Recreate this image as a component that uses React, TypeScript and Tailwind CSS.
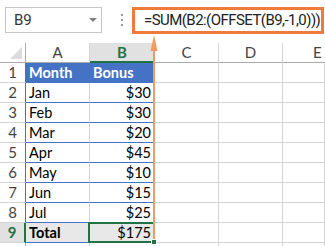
import { Fragment } from "react";

type Row = { n: number; a: string; b: string };

const rows: Row[] = [
  { n: 2, a: "Jan", b: "$30" },
  { n: 3, a: "Feb", b: "$30" },
  { n: 4, a: "Mar", b: "$20" },
  { n: 5, a: "Apr", b: "$45" },
  { n: 6, a: "May", b: "$10" },
  { n: 7, a: "Jun", b: "$15" },
  { n: 8, a: "Jul", b: "$25" },
];

const cellFont = { fontFamily: "Lato, 'Liberation Sans', sans-serif" };

function RowHead({ n, selected, blue }: { n?: number; selected?: boolean; blue?: boolean }) {
  return (
    <div
      className={
        "h-5 flex items-center justify-center border-b border-b-[#d4d4d4] text-[15px] " +
        (selected
          ? "bg-[#e1e1e1] text-[#217346] font-bold border-r-2 border-r-[#217346]"
          : blue
          ? "text-[#444] border-r border-r-[#4472c4]"
          : "text-[#444] border-r border-r-[#ababab]")
      }
    >
      {n}
    </div>
  );
}

function Empty() {
  return <div className="h-5 border-r border-b border-[#d4d4d4]" />;
}

export default function App() {
  return (
    <div className="relative w-[325px] h-[246px] overflow-hidden bg-white select-none" style={cellFont}>
      {/* formula bar */}
      <div className="h-[43px] flex items-start">
        <div className="mt-[7px] ml-[5px] w-[97px] h-[26px] border border-[#c6c6c6] flex items-center justify-between pl-[8px] pr-[4px]">
          <span className="text-[15px] text-[#333]" style={{ fontFamily: "Roboto, sans-serif" }}>B9</span>
          <svg width="8" height="5" viewBox="0 0 8 5">
            <path d="M0 0 L8 0 L4 4 Z" fill="#808080" />
          </svg>
        </div>
        <div className="ml-[19px] mt-[14px] flex flex-col gap-[3px]">
          <span className="w-[2px] h-[2px] bg-[#9a9a9a]" />
          <span className="w-[2px] h-[2px] bg-[#9a9a9a]" />
          <span className="w-[2px] h-[2px] bg-[#9a9a9a]" />
        </div>
        <div className="ml-[9px] mt-[7px] w-[192px] h-[27px] border-[3px] border-[#ee7b3b] flex items-center pl-[9px] overflow-hidden">
          <span
            className="text-[15px] text-[#222] whitespace-nowrap tracking-[-0.55px]"
            style={{ fontFamily: "Roboto, sans-serif" }}
          >
            =SUM(B2:(OFFSET(B9,-1,0)))
          </span>
        </div>
      </div>

      {/* grid */}
      <div className="grid grid-cols-[26px_64px_65px_64px_64px_1fr]">
        {/* column headers */}
        <div className="h-5 border-r border-r-[#ababab] border-b border-b-[#ababab] relative">
          <svg className="absolute right-[3px] bottom-[3px]" width="12" height="12" viewBox="0 0 12 12">
            <path d="M12 0 L12 12 L0 12 Z" fill="#dcdcdc" />
          </svg>
        </div>
        <div className="h-5 flex items-center justify-center text-[15px] text-[#444] border-r border-r-[#d4d4d4] border-b border-b-[#ababab]">A</div>
        <div className="h-5 flex items-center justify-center text-[15px] font-bold text-[#217346] bg-[#e1e1e1] border-r border-r-[#ababab] border-b-2 border-b-[#217346]">B</div>
        <div className="h-5 flex items-center justify-center text-[15px] text-[#444] border-r border-r-[#d4d4d4] border-b border-b-[#ababab]">C</div>
        <div className="h-5 flex items-center justify-center text-[15px] text-[#444] border-r border-r-[#d4d4d4] border-b border-b-[#ababab]">D</div>
        <div className="h-5 flex items-center pl-[30px] text-[15px] text-[#444] border-b border-b-[#ababab]">E</div>

        {/* row 1 */}
        <RowHead n={1} blue />
        <div className="h-5 bg-[#4472c4] border-b border-b-[#4472c4] flex items-center pl-[3px] text-[14.5px] font-bold text-white">Month</div>
        <div className="h-5 bg-[#4472c4] border-r border-r-[#4472c4] border-b border-b-[#4472c4] flex items-center pl-[3px] text-[14.5px] font-bold text-white">Bonus</div>
        <Empty />
        <Empty />
        <Empty />

        {rows.map((r) => (
          <Fragment key={r.n}>
            <RowHead n={r.n} blue />
            <div className="h-5 border-r border-r-[#d4d4d4] border-b border-b-[#4472c4] flex items-center pl-[3px] text-[14.5px] text-black">{r.a}</div>
            <div className="h-5 border-r border-r-[#4472c4] border-b border-b-[#4472c4] flex items-center justify-end pr-[3px] text-[14.5px] text-black">{r.b}</div>
            <Empty />
            <Empty />
            <Empty />
          </Fragment>
        ))}

        {/* row 9 */}
        <RowHead n={9} selected />
        <div className="h-5 bg-[#e8e8e8] border-r border-r-[#d4d4d4] border-b border-b-[#4472c4] flex items-center pl-[3px] text-[14.5px] font-bold text-black">Total</div>
        <div className="h-5 bg-[#e8e8e8] border-r border-r-[#4472c4] border-b border-b-[#4472c4] flex items-center justify-end pr-[3px] text-[14.5px] text-black">$175</div>
        <Empty />
        <Empty />
        <Empty />

        {/* row 10, only its top edge shows */}
        <RowHead />
        <Empty />
        <Empty />
        <Empty />
        <Empty />
        <Empty />
      </div>

      {/* selection of B9 */}
      <div className="absolute left-[88px] top-[222px] w-[67px] h-[21px] border-2 border-[#217346]" />

      {/* arrow from formula to B9 */}
      <svg className="absolute left-0 top-0 pointer-events-none" width="325" height="246">
        <line x1="154" y1="48" x2="154" y2="241" stroke="#f39a61" strokeWidth="2" />
        <path d="M154 35 L157.5 51 L150.5 51 Z" fill="#f39a61" />
      </svg>

      {/* fill handle */}
      <div className="absolute left-[151px] top-[239px] w-[6px] h-[6px] bg-[#217346] border border-white" />
    </div>
  );
}
